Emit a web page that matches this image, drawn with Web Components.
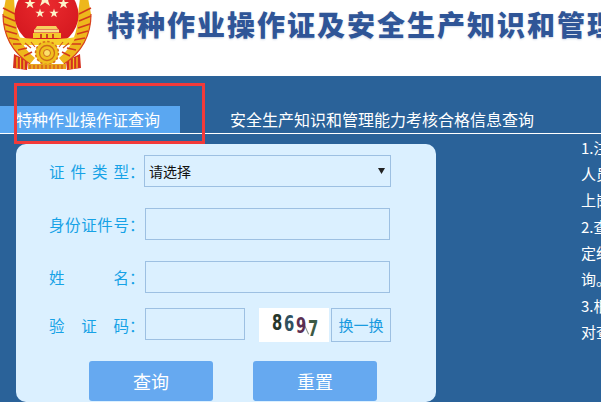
<!DOCTYPE html>
<html lang="zh-CN"><head><meta charset="utf-8"><title>特种作业操作证查询</title>
<style>
html,body{margin:0;padding:0;width:601px;height:402px;overflow:hidden;background:#fff;font-family:"Noto Sans CJK SC","Liberation Sans",sans-serif}
query-page{display:block;width:601px;height:402px}
</style></head><body>
<query-page></query-page>
<script>
function def(name, html, setup){
  customElements.define(name, class extends HTMLElement{
    constructor(){super();this.attachShadow({mode:'open'}).innerHTML=html;}
    connectedCallback(){ if(setup) setup(this); }
  });
}
const FONT='"Noto Sans CJK SC","Liberation Sans",sans-serif';

def('nat-emblem',`<style>:host{display:block;width:94px;height:76px;flex:none}svg{display:block}</style>
<svg width="94" height="76" viewBox="0 0 94 76">
<defs><radialGradient id="r" cx="50%" cy="35%" r="65%"><stop offset="0" stop-color="#ea2a2e"/><stop offset="1" stop-color="#d4181f"/></radialGradient></defs>
<path d="M14 54l-1 14 14 2 1-9zM80 54l1 14-14 2-1-9z" fill="#d5301f"/>
<path d="M17 57v11M20.500 58v11M24 60v9M77 57v11M73.500 58v11M70 60v9" stroke="#f1c21e" stroke-width="1.300" fill="none"/>
<path d="M3 14C3 36 12 52 30 64l5-6C22 48 16 32 15 14L14-2 6 -2zM91 14C91 36 82 52 64 64l-5-6C72 48 78 32 78 14L80-2l8 0z" fill="#eeb71c"/>
<path d="M3 8l12 6M3 16l12 5M4 24l12 4M6 31l11 3M9 38l11 2M13 44l10 0M18 50l9-2M24 56l8-4M91 8l-12 6M91 16l-12 5M90 24l-12 4M88 31l-11 3M85 38l-11 2M81 44l-10 0M76 50l-9-2M70 56l-8-4" stroke="#d23a1c" stroke-width="1.600"/>
<path d="M3 14C3 36 12 52 30 64M91 14C91 36 82 52 64 64" stroke="#d8421f" stroke-width="1.200" fill="none"/>
<ellipse cx="46.500" cy="15" rx="32" ry="31" fill="url(#r)"/>
<g fill="#fdf3c9">
<path d="M30 -2l1.300 3.900h4.200l-3.400 2.400 1.300 4-3.400-2.400-3.400 2.400 1.300-4-3.400-2.400h4.200z"/>
<path d="M63.500 -2l1.300 3.900h4.200l-3.400 2.400 1.300 4-3.400-2.400-3.400 2.400 1.300-4-3.400-2.400h4.200z"/>
<path d="M45 -9l2 6h6l-5 3.600 2 5.400-5-3.400-5 3.400 2-5.400-5-3.600h6z"/>
<path d="M40 8.500l1.100 3.200h3.600l-2.900 2.100 1.100 3.500-2.900-2.100-2.900 2.100 1.100-3.500-2.900-2.100h3.600z"/>
<path d="M54 8.500l1.100 3.200h3.600l-2.900 2.100 1.100 3.500-2.900-2.100-2.900 2.100 1.100-3.500-2.900-2.100h3.600z"/>
</g>
<path d="M37 26h19l2 3H35z" fill="#f6cf5e"/>
<path d="M34 29.500h25v3H34z" fill="#f8e08a"/>
<path d="M33 33h28v5H33z" fill="#f5c92a"/>
<path d="M17 37c8 1.500 16 2 30 2s21-.5 29-2l-5 8H22z" fill="#f7cf2b"/>
<path d="M40 34h2v4h-2zM46 34h2v4h-2zM52 34h2v4h-2z" fill="#c8401f"/>
<path d="M25 43l6 5M31 42l4 5M69 43l-6 5M63 42l-4 5" stroke="#d2571c" stroke-width="1.200"/>
<circle cx="47" cy="53" r="11.500" fill="#f0c01e"/>
<circle cx="47" cy="53" r="11.500" fill="none" stroke="#d8701c" stroke-width="1.500" stroke-dasharray="2.500 2"/>
<circle cx="47" cy="53" r="7.500" fill="none" stroke="#cf6a1a" stroke-width="1.300"/>
<circle cx="47" cy="53" r="3.500" fill="#fbe06a" stroke="#cf6a1a"/>
<path d="M28 64h38v5H28z" fill="#e8a51d"/>
<path d="M30 65v4M34 65v4M38 65v4M42 65v4M46 65v4M50 65v4M54 65v4M58 65v4M62 65v4" stroke="#d2401f"/>
</svg>`);

def('site-header',`<style>:host{display:flex;height:76px;background:#fff;overflow:hidden;white-space:nowrap}
.t{margin:9px 0 0 13px;font:900 28px/30px ${FONT};letter-spacing:2px;color:#2f5597;text-shadow:0 1px 2px rgba(47,85,151,.22)}</style>
<nat-emblem></nat-emblem><div class="t"><slot></slot></div>`);

def('tab-bar',`<style>:host{display:flex;height:27px;border-bottom:1px solid #fff;margin-top:30px;white-space:nowrap}</style><slot></slot>`);
def('tab-item',`<style>:host{display:block;font:400 16px/27px ${FONT};color:#fff;box-sizing:border-box}
:host([active]){background:#5aa7f1;width:180px;padding-left:16px}
:host(:not([active])){margin-left:50px}</style><slot></slot>`);

def('form-row',`<style>:host{display:flex;align-items:center;height:32px}
.l{width:80px;font:400 15.500px/32px ${FONT};color:#16a2e6;text-align:justify;text-align-last:justify;flex:none;white-space:normal}
.c{width:16px;flex:none;font:400 15.500px/32px ${FONT};color:#16a2e6;}
.b{display:flex;align-items:center;flex:1}</style>
<div class="l" part="label"></div><div class="c">：</div><div class="b"><slot></slot></div>`, el=>{
  el.shadowRoot.querySelector('.l').textContent=el.getAttribute('label');
});

def('text-box',`<style>:host{display:block;box-sizing:border-box;width:245px;height:32px;border:1px solid #9dc0e2;background:#dbf0ff}
:host([short]){width:100px}
input{all:unset;display:block;width:100%;height:100%}</style><input type="text">`);

def('type-select',`<style>:host{display:block;margin-left:-1px}
select{display:block;appearance:none;box-sizing:border-box;width:247px;height:32px;border:1px solid #9dc0e2;border-radius:0;background:#dbf0ff url("data:image/svg+xml,%3Csvg xmlns='http://www.w3.org/2000/svg' width='7' height='6'%3E%3Cpath d='M0 0h7L3.500 6z' fill='%23222'/%3E%3C/svg%3E") no-repeat 233px 12px;color:#111;font:400 14px/30px ${FONT};padding:0 0 2px 4px;outline:none}</style>
<select><option>请选择</option></select>`);

def('captcha-image',`<style>:host{display:block;position:relative;box-sizing:border-box;width:70px;height:34px;background:#fff;margin-left:14px;flex:none;overflow:hidden;font:700 20px/20px "DejaVu Sans Condensed","Liberation Sans Narrow","Liberation Sans",sans-serif}
span{position:absolute;display:block;transform-origin:0 0}
.a{left:13px;top:3px;color:#26352a;transform:scale(.82,1.1)}
.b{left:25px;top:4px;color:#2f5160;transform:scale(.82,1.1)}
.c{left:37px;top:6px;color:#5b2f52;transform:scale(.82,1.1)}
.d{left:49px;top:9px;color:#3d5a45;transform:scale(.82,1.1)}
i{position:absolute;left:46px;top:12px;width:1px;height:15px;background:#8a958c;transform:rotate(-25deg)}
</style><i></i><span class="a">8</span><span class="b">6</span><span class="c">9</span><span class="d">7</span>`);

def('swap-button',`<style>:host{display:block;box-sizing:border-box;width:60px;height:34px;margin-left:2px;border:1px solid #9dc0e2;font:400 15px/32px ${FONT};color:#1a9be0;text-align:center;flex:none}</style><slot></slot>`);

def('action-button',`<style>:host{display:block;width:124px;height:40px;background:#66a9f0;border-radius:3px;color:#fff;font:400 18px/40px ${FONT};text-align:center}</style><slot></slot>`);

def('query-form',`<style>:host{display:block;box-sizing:border-box;width:420px;height:258px;margin:10px 0 0 16px;background:#dbf0ff;border-radius:10px;padding:11px 0 0 33px;flex:none}
.rows{display:flex;flex-direction:column}
.r1{margin-bottom:21px}
.r2{margin-bottom:21px}
.r3{margin-bottom:15px}
.acts{display:flex;gap:40px;margin:19px 0 0 40px}
.cap{height:34px}
</style>
<div class="rows">
<form-row class="r1" label="证 件 类 型"><type-select></type-select></form-row>
<form-row class="r2" label="身份证件号"><text-box></text-box></form-row>
<form-row class="r3" label="姓 名"><text-box></text-box></form-row>
<form-row class="cap" label="验 证 码"><text-box short style="margin-bottom:2px"></text-box><captcha-image></captcha-image><swap-button>换一换</swap-button></form-row>
</div>
<div class="acts"><action-button>查询</action-button><action-button>重置</action-button></div>`);

def('info-notes',`<style>:host{display:block;margin:0 0 0 145px;padding-top:1px;color:#fff;font:400 15px/26px ${FONT};white-space:nowrap;width:20px;flex:none}
p{margin:0}p+p{margin-top:1px}</style>
<p>1.注<br>人员<br>上岗</p><p>2.查<br>定经<br>询。</p><p>3.根<br>对查</p>`);

def('red-marker',`<style>:host{position:absolute;left:14px;top:83px;width:191px;height:61px;box-sizing:border-box;border:3px solid #f23a3a;pointer-events:none}</style>`);

def('query-page',`<style>:host{display:block;position:relative;width:601px;height:402px;overflow:hidden;background:#2a6299}
.main{display:flex;height:269px;overflow:hidden}</style>
<site-header>特种作业操作证及安全生产知识和管理能力考核合格信息查询</site-header>
<tab-bar><tab-item active>特种作业操作证查询</tab-item><tab-item>安全生产知识和管理能力考核合格信息查询</tab-item></tab-bar>
<div class="main"><query-form></query-form><info-notes></info-notes></div>
<red-marker></red-marker>`);
</script>
</body></html>
